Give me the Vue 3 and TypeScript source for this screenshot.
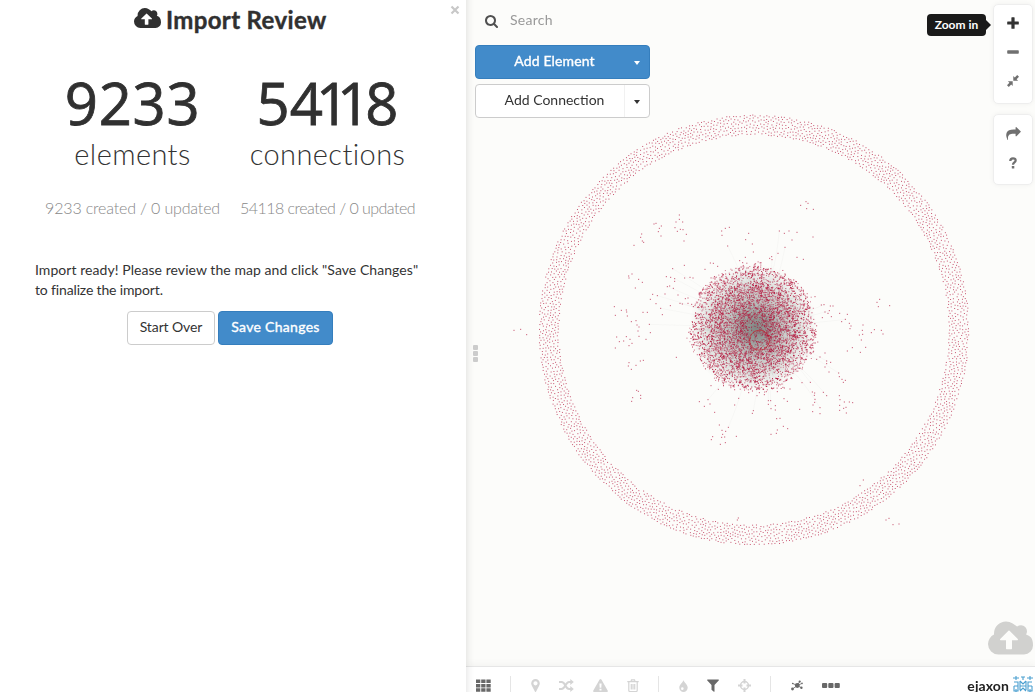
<script setup lang="ts">
import { onMounted, ref } from 'vue'

interface Stat { digits: string[]; label: string; detail: string; kind: string }

const stats: Stat[] = [
  { digits: '9233'.split(''), label: 'elements', detail: '9233 created / 0 updated', kind: 'elements' },
  { digits: '54118'.split(''), label: 'connections', detail: '54118 created / 0 updated', kind: 'connections' },
]

const cloudPath = 'M1280 928q0-14-9-23L919 553q-9-9-23-9t-23 9L522 904q-10 12-10 24 0 14 9 23t23 9h224v352q0 13 9.5 22.5T800 1344h192q13 0 22.5-9.5t9.5-22.5V960h224q13 0 22.5-9.5T1280 928zm640 256q0 159-112.5 271.5T1536 1568H448q-185 0-316.5-131.5T0 1120q0-130 70-240t188-165q-2-30-2-43 0-212 150-362t362-150q156 0 285.5 87T1242 378q71-62 166-62 106 0 181 75t75 181q0 76-41 138 130 31 213.5 135.5T1920 1184z'

const graph = ref<HTMLCanvasElement | null>(null)

// Loose nodes around the core, in thirds of a pixel from (134, 190) on the map.
const loose: number[] = [
  602,46, 618,35, 624,40, 620,56, 640,58, 238,75, 238,88, 228,96, 248,96, 225,113, 232,124, 241,118, 249,119, 259,133, 252,153,
  162,102, 168,100, 184,108, 178,115, 175,125, 183,138, 125,132, 122,142, 127,153, 131,157, 102,166, 365,123, 376,115, 388,112, 366,136,
  383,168, 446,130, 437,149, 457,162, 460,186, 538,123, 567,123, 553,130, 591,127, 576,150, 555,172, 639,141, 534,190, 515,200, 509,205, 516,209,
  591,202, 610,208, 436,202, 419,212, 428,218, 331,219, 340,220, 353,229, 315,238, 218,236, 253,226, 96,252, 86,258, 87,264, 116,268, 127,277,
  106,294, 199,260, 212,262, 224,266, 224,274, 254,264, 270,262, 279,264, 202,290, 209,288, 220,295, 234,315, 158,313, 172,317, 195,312, 151,328,
  211,347, 168,341, 182,355, 187,374, 142,367, 129,367, 43,350, 64,361, 79,360, 80,366, 46,376, 82,378, 108,392, 94,395, 111,405, 117,411, 114,423,
  148,403, 151,428, 138,448, 117,439, 50,441, 79,440, 90,448, 71,453, 58,455, 96,460, 87,467, 46,474, 229,502, 87,518, 85,528, 94,538, 108,526, 121,513, 130,511,
  110,601, 115,604, 122,616, 122,625, 98,623, 95,634, 240,340, 247,342, 256,326, 264,324, 264,340, 275,343, 330,295, 344,280,
  645,320, 664,345, 672,344, 691,348, 699,348, 675,366, 684,370, 688,362, 694,380, 667,383, 719,370, 742,373, 736,388, 725,395, 748,400, 753,408, 750,416,
  789,405, 787,421, 814,428, 823,419, 844,421, 849,432, 788,433, 778,435, 784,450, 797,472, 781,487, 757,473, 742,483, 839,328, 831,337, 835,350, 869,347,
  675,489, 660,501, 650,508, 680,513, 692,517, 680,521, 675,531, 687,546, 716,549, 718,560, 736,571, 726,568, 730,577,
  631,577, 606,578, 637,606, 644,609, 670,607, 680,617, 643,616, 645,628, 644,637, 639,645, 660,653, 660,671, 638,665,
  718,617, 720,629, 719,646, 719,661, 733,636, 748,636, 758,638, 738,652, 731,655, 739,669,
  552,626, 562,634, 505,632, 512,632, 526,647, 526,660, 505,643, 513,656, 599,658, 540,685, 530,686, 550,709, 563,716, 532,720, 529,730, 513,733,
  471,617, 460,662, 457,670, 416,625, 404,645, 330,642, 324,629, 313,649, 298,635, 344,667, 358,705, 385,712, 366,721, 377,724, 368,733, 374,741, 338,740, 334,749, 365,742, 376,758, 361,763, 409,739,
  446,608, 478,608, 493,614, 532,605, 553,594, 570,597, 333,587, 355,598, 304,512, 318,520, -258,421, -238,418, -220,434,
  780,887, 790,870, 897,1002, 879,1004, 867,985, 858,990, 412,990, 415,984,
]

function randomFrom(seed: number) {
  return () => {
    seed = (seed + 0x6d2b79f5) | 0
    let t = Math.imul(seed ^ (seed >>> 15), 1 | seed)
    t = (t + Math.imul(t ^ (t >>> 7), 61 | t)) ^ t
    return ((t ^ (t >>> 14)) >>> 0) / 4294967296
  }
}

onMounted(() => {
  const ctx = graph.value?.getContext('2d')
  if (!ctx) return
  const rnd = randomFrom(54118)
  const dot = (x: number, y: number, alpha: number, size = 1) => {
    ctx.fillStyle = `rgba(178, 16, 56, ${alpha})`
    ctx.fillRect(x, y, size, size)
  }

  // Unconnected elements packed into a ring
  const ringX = 288, ringY = 330
  const taken: number[][] = []
  const cells = new Map<string, number[][]>()
  const gap = 2.5
  for (let i = 0; i < 60000; i++) {
    const a = rnd() * Math.PI * 2
    const r = Math.sqrt(195 * 195 + rnd() * (215 * 215 - 195 * 195))
    const x = ringX + Math.cos(a) * r
    const y = ringY + Math.sin(a) * r
    const gx = Math.floor(x / gap), gy = Math.floor(y / gap)
    let free = true
    for (let u = -1; u <= 1 && free; u++) {
      for (let v = -1; v <= 1 && free; v++) {
        for (const p of cells.get(`${gx + u},${gy + v}`) ?? []) {
          if (Math.hypot(p[0] - x, p[1] - y) < gap) { free = false; break }
        }
      }
    }
    if (!free) continue
    const key = `${gx},${gy}`
    cells.set(key, [...(cells.get(key) ?? []), [x, y]])
    taken.push([x, y])
  }
  for (const [x, y] of taken) dot(x - 0.5, y - 0.5, 0.7)

  // Connections inside the core
  const cx = 287, cy = 328
  const haze = ctx.createRadialGradient(cx + 3, cy, 0, cx, cy, 64)
  haze.addColorStop(0, 'rgba(115, 122, 118, .9)')
  haze.addColorStop(0.2, 'rgba(122, 128, 124, .75)')
  haze.addColorStop(0.45, 'rgba(140, 146, 142, .46)')
  haze.addColorStop(0.75, 'rgba(160, 165, 160, .24)')
  haze.addColorStop(1, 'rgba(180, 185, 180, 0)')
  ctx.fillStyle = haze
  ctx.fillRect(cx - 66, cy - 66, 132, 132)
  ctx.lineWidth = 0.5
  for (let i = 0; i < 400; i++) {
    const a = rnd() * Math.PI * 2
    const b = a + (rnd() - 0.5) * 2
    const r = 62 * Math.sqrt(rnd())
    const s = 45 * rnd()
    ctx.strokeStyle = 'rgba(110, 120, 115, .08)'
    ctx.beginPath()
    ctx.moveTo(cx + Math.cos(a) * r, cy + Math.sin(a) * r)
    ctx.lineTo(cx + Math.cos(b) * s, cy + Math.sin(b) * s)
    ctx.stroke()
  }

  // Connected elements: a dense middle and a looser shell
  for (let i = 0; i < 5600; i++) {
    const a = rnd() * Math.PI * 2
    const edge = 57 + Math.sin(a * 7) * 1.5 + (rnd() + rnd() + rnd()) * 3.6
    const r = i % 5 < 3 ? edge * Math.sqrt(rnd()) : 42 * Math.pow(rnd(), 0.6) + rnd() * 5
    if (r < 10 && rnd() < 0.45) continue
    if (Math.hypot(Math.cos(a) * r - 6, Math.sin(a) * r - 12) < 8 && rnd() < 0.5) continue
    dot(cx + Math.cos(a) * r - 0.5, cy + Math.sin(a) * r - 0.5, (r < 40 ? 0.35 : 0.5) + rnd() * 0.42)
  }

  // Selected hub
  ctx.strokeStyle = 'rgba(190, 40, 50, .75)'
  ctx.lineWidth = 1
  ctx.beginPath()
  ctx.arc(293.5, 340.2, 10, 0, Math.PI * 2)
  ctx.stroke()

  ctx.lineWidth = 0.5
  for (let i = 0; i < loose.length; i += 2) {
    const x = 134 + loose[i] / 3
    const y = 190 + loose[i + 1] / 3
    dot(x - 0.5, y - 0.5, 0.78)
    if (i % 10 === 0 && Math.hypot(x - cx, y - cy) < 105) {
      const k = 58 / Math.hypot(x - cx, y - cy)
      ctx.strokeStyle = 'rgba(120, 125, 120, .07)'
      ctx.beginPath()
      ctx.moveTo(x, y)
      ctx.quadraticCurveTo((x + cx) / 2 + 8, (y + cy) / 2, cx + (x - cx) * k, cy + (y - cy) * k)
      ctx.stroke()
    }
  }
})
</script>

<template>
  <div class="app">
    <aside class="panel">
      <svg class="close" viewBox="0 0 10 10"><path d="M1.500 1.500l7 7M8.500 1.500l-7 7" /></svg>
      <h1 class="title">
        <svg class="title-icon" viewBox="0 160 1920 1408"><path :d="cloudPath" /></svg>
        <span>Import Review</span>
      </h1>
      <div class="stats">
        <section v-for="s in stats" :key="s.kind" class="stat" :class="s.kind">
          <div class="number"><span v-for="(d, i) in s.digits" :key="i" :class="{ one: d === '1' }">{{ d }}</span></div>
          <div class="label"><span>{{ s.label }}</span></div>
          <div class="detail"><span>{{ s.detail }}</span></div>
        </section>
      </div>
      <p class="message"><span class="line-a">Import ready! Please review the map and click "Save Changes"</span><br><span class="line-b">to finalize the import.</span></p>
      <div class="actions">
        <button class="btn start">Start Over</button>
        <button class="btn primary save">Save Changes</button>
      </div>
    </aside>

    <main class="map">
      <canvas ref="graph" class="graph" width="569" height="666"></canvas>
      <div class="edge-shade"></div>
      <div class="handle"><i></i><i></i><i></i></div>

      <div class="tools">
        <div class="search">
          <svg viewBox="64 128 1664 1664"><path d="M1216 832q0-185-131.500-316.500T768 384 451.500 515.500 320 832t131.500 316.500T768 1280t316.500-131.500T1216 832zm512 832q0 52-38 90t-90 38q-54 0-90-38l-343-342q-179 124-399 124-143 0-273.500-55.500t-225-150-150-225T64 832t55.500-273.500 150-225 225-150T768 128t273.500 55.500 225 150 150 225T1472 832q0 220-124 399l343 343q37 37 37 90z" /></svg>
          <span>Search</span>
        </div>
        <div class="split primary"><span class="split-label add-el">Add Element</span><span class="split-caret"><i></i></span></div>
        <div class="split"><span class="split-label add-con">Add Connection</span><span class="split-caret"><i></i></span></div>
      </div>

      <div class="tooltip">Zoom in</div>
      <div class="controls">
        <div class="control-group zoomers">
          <svg class="dark" viewBox="0 0 12 12"><path d="M4.400 .7q0-.5.5-.5h2.200q.5 0 .5.500v3.700h3.700q.5 0 .5.500v2.200q0 .5-.5.500H7.600v3.700q0 .5-.5.500H4.900q-.5 0-.5-.5V7.600H.7q-.5 0-.5-.5V4.900q0-.5.5-.5h3.700z" /></svg>
          <svg viewBox="0 0 12 12"><rect x=".2" y="4.300" width="11.600" height="3.500" rx=".8" /></svg>
          <svg viewBox="0 0 12 12"><path d="M6.300 5.700V.900l1.500 1.500L10.200 0 12 1.800 9.600 4.200l1.500 1.500zM5.700 6.300v4.800L4.200 9.600 1.800 12 0 10.200l2.400-2.400L.9 6.300z" /></svg>
        </div>
        <div class="control-group helpers">
          <svg class="share" viewBox="0 64 1792 1600"><path d="M1792 640q0 26-19 45l-512 512q-19 19-45 19t-45-19-19-45V896H928q-98 0-175.500 6t-154 21.500-133 42.500-105.500 69.500-80 101-48.500 138.500T214 1456q0 55 5 123 0 6 2.500 23.500t2.500 26.500q0 15-8.500 25t-23.500 10q-16 0-28-17-7-9-13-22t-13.500-30-10.500-24Q0 1286 0 1120q0-199 53-333 162-403 875-403h224V128q0-26 19-45t45-19 45 19l512 512q19 19 19 45z" /></svg>
          <svg class="help" viewBox="0 0 8 12"><path d="M1.300 4Q1.300 1.300 4 1.300T6.600 3.500C6.600 5.500 4 5.200 4 7.700" fill="none" stroke="currentColor" stroke-width="2.300" /><rect x="2.800" y="9" width="2.500" height="2.600" rx=".4" /></svg>
        </div>
      </div>

      <svg class="upload" viewBox="0 160 1920 1408"><path :d="cloudPath" /></svg>

      <footer class="bar">
        <svg class="i-grid dim" viewBox="0 0 15 13"><path d="M0 .5h4.300v3.500H0zM5.200.5h4.300v3.500H5.200zM10.400.5h4.300v3.500h-4.300zM0 4.900h4.300v3.500H0zM5.200 4.900h4.300v3.500H5.200zM10.400 4.900h4.300v3.500h-4.300zM0 9.300h4.300v3.500H0zM5.200 9.300h4.300v3.500H5.200zM10.400 9.300h4.300v3.500h-4.300z" /></svg>
        <i class="sep s1"></i>
        <svg class="i-pin" viewBox="0 0 9 13"><path fill-rule="evenodd" d="M4.500 0A4.300 4.300 0 0 1 8.800 4.300c0 1.200-.4 1.800-.8 2.600L5 12.700q-.5.6-1 0L1 6.900C.6 6 .2 5.500.2 4.300A4.300 4.300 0 0 1 4.500 0zm0 2.200a2.100 2.100 0 1 0 0 4.200 2.100 2.100 0 0 0 0-4.200z" /></svg>
        <svg class="i-shuffle" viewBox="0 0 15 13"><path d="M0 3h2.500C6.500 3 6.500 10 10 10h2M0 10h2.500C6.500 10 6.500 3 10 3h2" fill="none" stroke="currentColor" stroke-width="2" /><path d="M11.300 0L14.800 3l-3.500 3zM11.300 7l3.500 3-3.500 3z" /></svg>
        <svg class="i-warn" viewBox="0 0 15 13"><path fill-rule="evenodd" d="M6.600.5q.9-1 1.800 0l6.400 11.300q.3 1-.8 1.200H1q-1.100-.2-.8-1.200zM6.400 4.500l.3 4.300h1.600l.3-4.300zM6.500 9.700v1.800h2V9.700z" /></svg>
        <svg class="i-trash" viewBox="0 0 12 13"><path d="M.3 2.700h11.400M4 2.500l.5-1.700h3l.5 1.700M1.800 3v8.500q0 1 1 1h6.400q1 0 1-1V3M4.300 5v5.500M6 5v5.500M7.700 5v5.500" fill="none" stroke="currentColor" stroke-width="1.200" /></svg>
        <i class="sep s2"></i>
        <svg class="i-drop" viewBox="0 0 9 12"><path fill-rule="evenodd" d="M4.500 0c.5 2.600 4.200 4.500 4.200 7.700a4.200 4.200 0 0 1-8.400 0C.3 4.500 4 2.600 4.500 0zM3.300 7.300a1.300 1.300 0 1 0 .1 2.600 1.300 1.300 0 0 0-.1-2.600z" /></svg>
        <svg class="i-filter dim" viewBox="0 0 12 13"><path d="M.6.500h10.800q.9.300.3 1.100L7.500 6v6.400q-.3.700-.9.200L4.500 10.700V6L.3 1.600Q-.2.800.6.500z" /></svg>
        <svg class="i-cross" viewBox="0 0 13 13"><circle cx="6.500" cy="6.500" r="4" fill="none" stroke="currentColor" stroke-width="1.500" /><path d="M5.500 0h2v4.500h-2zM5.500 8.500h2V13h-2zM0 5.500h4.500v2H0zM8.500 5.500H13v2H8.500z" /></svg>
        <i class="sep s3"></i>
        <svg class="i-hub dim" viewBox="0 0 12 11"><path d="M6.300 5.500L1.500 9M6.300 5.500L1.700 3.500M6.300 5.500L8.700 1.600M6.300 5.500l4.500-2M6.300 5.500l4.200 2.300" fill="none" stroke="currentColor" stroke-width=".8" /><circle cx="6.300" cy="5.500" r="2.400" /><circle cx="1.500" cy="9" r="1.400" /><circle cx="1.700" cy="3.500" r=".8" /><circle cx="8.700" cy="1.600" r="1.100" /><circle cx="11" cy="3.400" r=".8" /><circle cx="10.400" cy="7.800" r="1.200" /></svg>
        <svg class="i-dots dim" viewBox="0 0 18 5"><rect width="5.200" height="5" rx="1" /><rect x="6.300" width="5.200" height="5" rx="1" /><rect x="12.600" width="5.200" height="5" rx="1" /></svg>
        <span class="user">ejaxon</span>
        <svg class="avatar" viewBox="0 0 20 20"><path d="M3 0v4M0 2h6M17 0v4M14 2h6M8 1h4M10 1v3M1 6h4v4H1M19 6h-4v4h4M7 5l3 3 3-3M7 5v9M13 5v9M7 10h6M1 10v5h4v-5M19 10v5h-4v-5M7 15l3-3 3 3M3 13v7M17 13v7M7 18h6" /></svg>
      </footer>
    </main>
  </div>
</template>

<style>
html, body { margin: 0; overflow: hidden; }
</style>

<style scoped>
* { box-sizing: border-box; }
.app { display: flex; width: 1035px; height: 692px; overflow: hidden; background: #fff; color: #333; font-family: Lato, "Open Sans", sans-serif; }
svg { display: block; fill: currentColor; flex: none; }
span { white-space: nowrap; }
.panel { position: relative; width: 466px; background: #fff; flex: none; }
.close { position: absolute; left: 450px; top: 5px; width: 10px; height: 10px; stroke: #c8c8c8; stroke-width: 2.200; }
.title { display: flex; align-items: center; margin: 0; padding: 4px 0 0 134px; height: 35px; font-size: 24px; line-height: 30px; font-weight: 700; gap: 5px; color: #303030; }
.title-icon { width: 27px; height: 20px; margin-top: -3px; }
.title span { -webkit-text-stroke: .4px currentColor; letter-spacing: .35px; }
.stats { display: flex; padding: 38px 0 0 35px; }
.stat { width: 195px; display: flex; flex-direction: column; align-items: center; }
.number { height: 60px; line-height: 60px; font-family: "Open Sans", sans-serif; font-size: 58px; display: flex; color: #303030; -webkit-text-stroke: .8px currentColor; }
.elements .number { letter-spacing: .7px; }
.number .one { margin: 0 -5px 0 -7px; }
.label { height: 42px; line-height: 42px; font-size: 29px; font-weight: 300; letter-spacing: .4px; }
.detail { height: 24px; line-height: 24px; margin-top: 21px; font-size: 16px; font-weight: 300; color: #888; }
.elements .detail { letter-spacing: -.16px; }
.connections .detail { letter-spacing: -.52px; }
.message { margin: 40px 0 0 35px; font-size: 14px; line-height: 20px; }
.line-a { letter-spacing: .06px; }
.line-b { letter-spacing: -.15px; }
.actions { display: flex; gap: 3px; padding: 11px 0 0 127px; }
.btn { height: 34px; border: 1px solid #ccc; border-radius: 4px; background: #fff; font: 14px/20px Lato, sans-serif; color: #333; padding: 0 0 2px; white-space: nowrap; }
.start { width: 88px; letter-spacing: -.1px; }
.save { width: 115px; }
.primary.btn, .primary.split { background: #428bca; border-color: #357ebd; color: #fff; font-weight: 400; -webkit-text-stroke: .35px currentColor; letter-spacing: .15px; }
.primary.save { letter-spacing: .3px; }
.map { position: relative; flex: 1; background: #fcfcfa; overflow: hidden; }
.graph { position: absolute; left: 0; top: 0; }
.edge-shade { position: absolute; inset: 0 auto 0 0; width: 8px; z-index: 3; background: linear-gradient(90deg, rgba(0,0,0,.065), rgba(0,0,0,.025) 50%, transparent); }
.handle { position: absolute; left: 7px; top: 345px; display: grid; gap: 1px; }
.handle i { width: 5px; height: 5px; border-radius: 1px; background: #ccc; }
.tools { position: relative; width: 175px; margin-left: 9px; }
.search { display: flex; align-items: center; height: 45px; padding: 0 0 4px 10px; gap: 12px; font-size: 14px; color: #999; letter-spacing: .25px; }
.search svg { width: 13px; height: 13px; color: #505050; margin-top: 1px; }
.search span { margin-top: -2px; }
.split { display: flex; height: 34px; border: 1px solid #ccc; border-radius: 4px; font-size: 14px; line-height: 30px; margin-bottom: 5px; background: #fff; }
.split-label { width: 149px; text-align: center; padding-left: 9px; border-right: 1px solid #f1f1f1; }
.split.primary .split-label { border-color: transparent; }
.split-caret { flex: 1; display: flex; align-items: center; justify-content: center; padding-top: 2px; }
.split-caret i { border: 3.500px solid transparent; border-top: 4px solid currentColor; border-bottom: 0; }
.tooltip { position: absolute; left: 461px; top: 14px; width: 59px; height: 22px; border-radius: 4px; background: #1a1a1a; color: #fff; font-size: 12px; line-height: 21px; font-weight: 700; text-align: center; }
.tooltip::after { content: ""; position: absolute; left: 59px; top: 6px; border: 5px solid transparent; border-left-color: #1a1a1a; border-right: 0; }
.controls { position: absolute; left: 527px; top: 4px; display: grid; gap: 10px; color: #707070; }
.control-group { width: 40px; display: flex; flex-direction: column; align-items: center; background: #fff; border: 1px solid #eee; border-radius: 5px; box-shadow: 0 0 5px rgba(0,0,0,.05); }
.control-group svg { width: 12px; height: 12px; }
.zoomers { height: 100px; padding-top: 12px; gap: 17px; }
.control-group .dark { color: #333; }
.helpers { height: 71px; padding-top: 12px; gap: 17px; }
.control-group .share { width: 15px; height: 13px; }
.control-group .help { width: 8px; height: 12px; }
.upload { position: absolute; left: 522px; top: 621px; width: 45px; height: 34px; color: #d1d1cf; }
.bar { position: absolute; left: 0; right: 0; top: 666px; height: 38px; border-top: 1px solid #e6e6e6; background: #fff; box-shadow: 0 -2px 8px rgba(0,0,0,.04); display: flex; align-items: center; padding-left: 10px; color: #d4d4d4; }
.bar .dim { color: #686868; }
.bar svg { height: 13px; }
.sep { width: 1px; height: 20px; background: #e5e5e5; flex: none; }
.i-grid { width: 15px; }
.s1 { margin-left: 19px; }
.bar .i-pin { width: 9px; margin-left: 20px; }
.bar .i-shuffle { width: 15px; margin-left: 19px; }
.bar .i-warn { width: 15px; margin-left: 19px; }
.bar .i-trash { width: 12px; margin-left: 19px; }
.s2 { margin-left: 19px; }
.bar .i-drop { width: 9px; height: 12px; margin-left: 20px; }
.bar .i-filter { width: 12px; margin-left: 19px; }
.bar .i-cross { width: 13px; margin-left: 19px; }
.s3 { margin-left: 19px; }
.bar .i-hub { width: 12px; height: 11px; margin-left: 20px; }
.bar .i-dots { width: 18px; height: 5px; margin-left: 19px; }
.user { margin-left: auto; color: #222; font-size: 14px; line-height: 18px; font-weight: 700; letter-spacing: .1px; }
.bar .avatar { width: 20px; height: 20px; margin: 0 2px 0 4px; fill: none; stroke: #4a9fd0; stroke-width: 1.100; }
</style>
